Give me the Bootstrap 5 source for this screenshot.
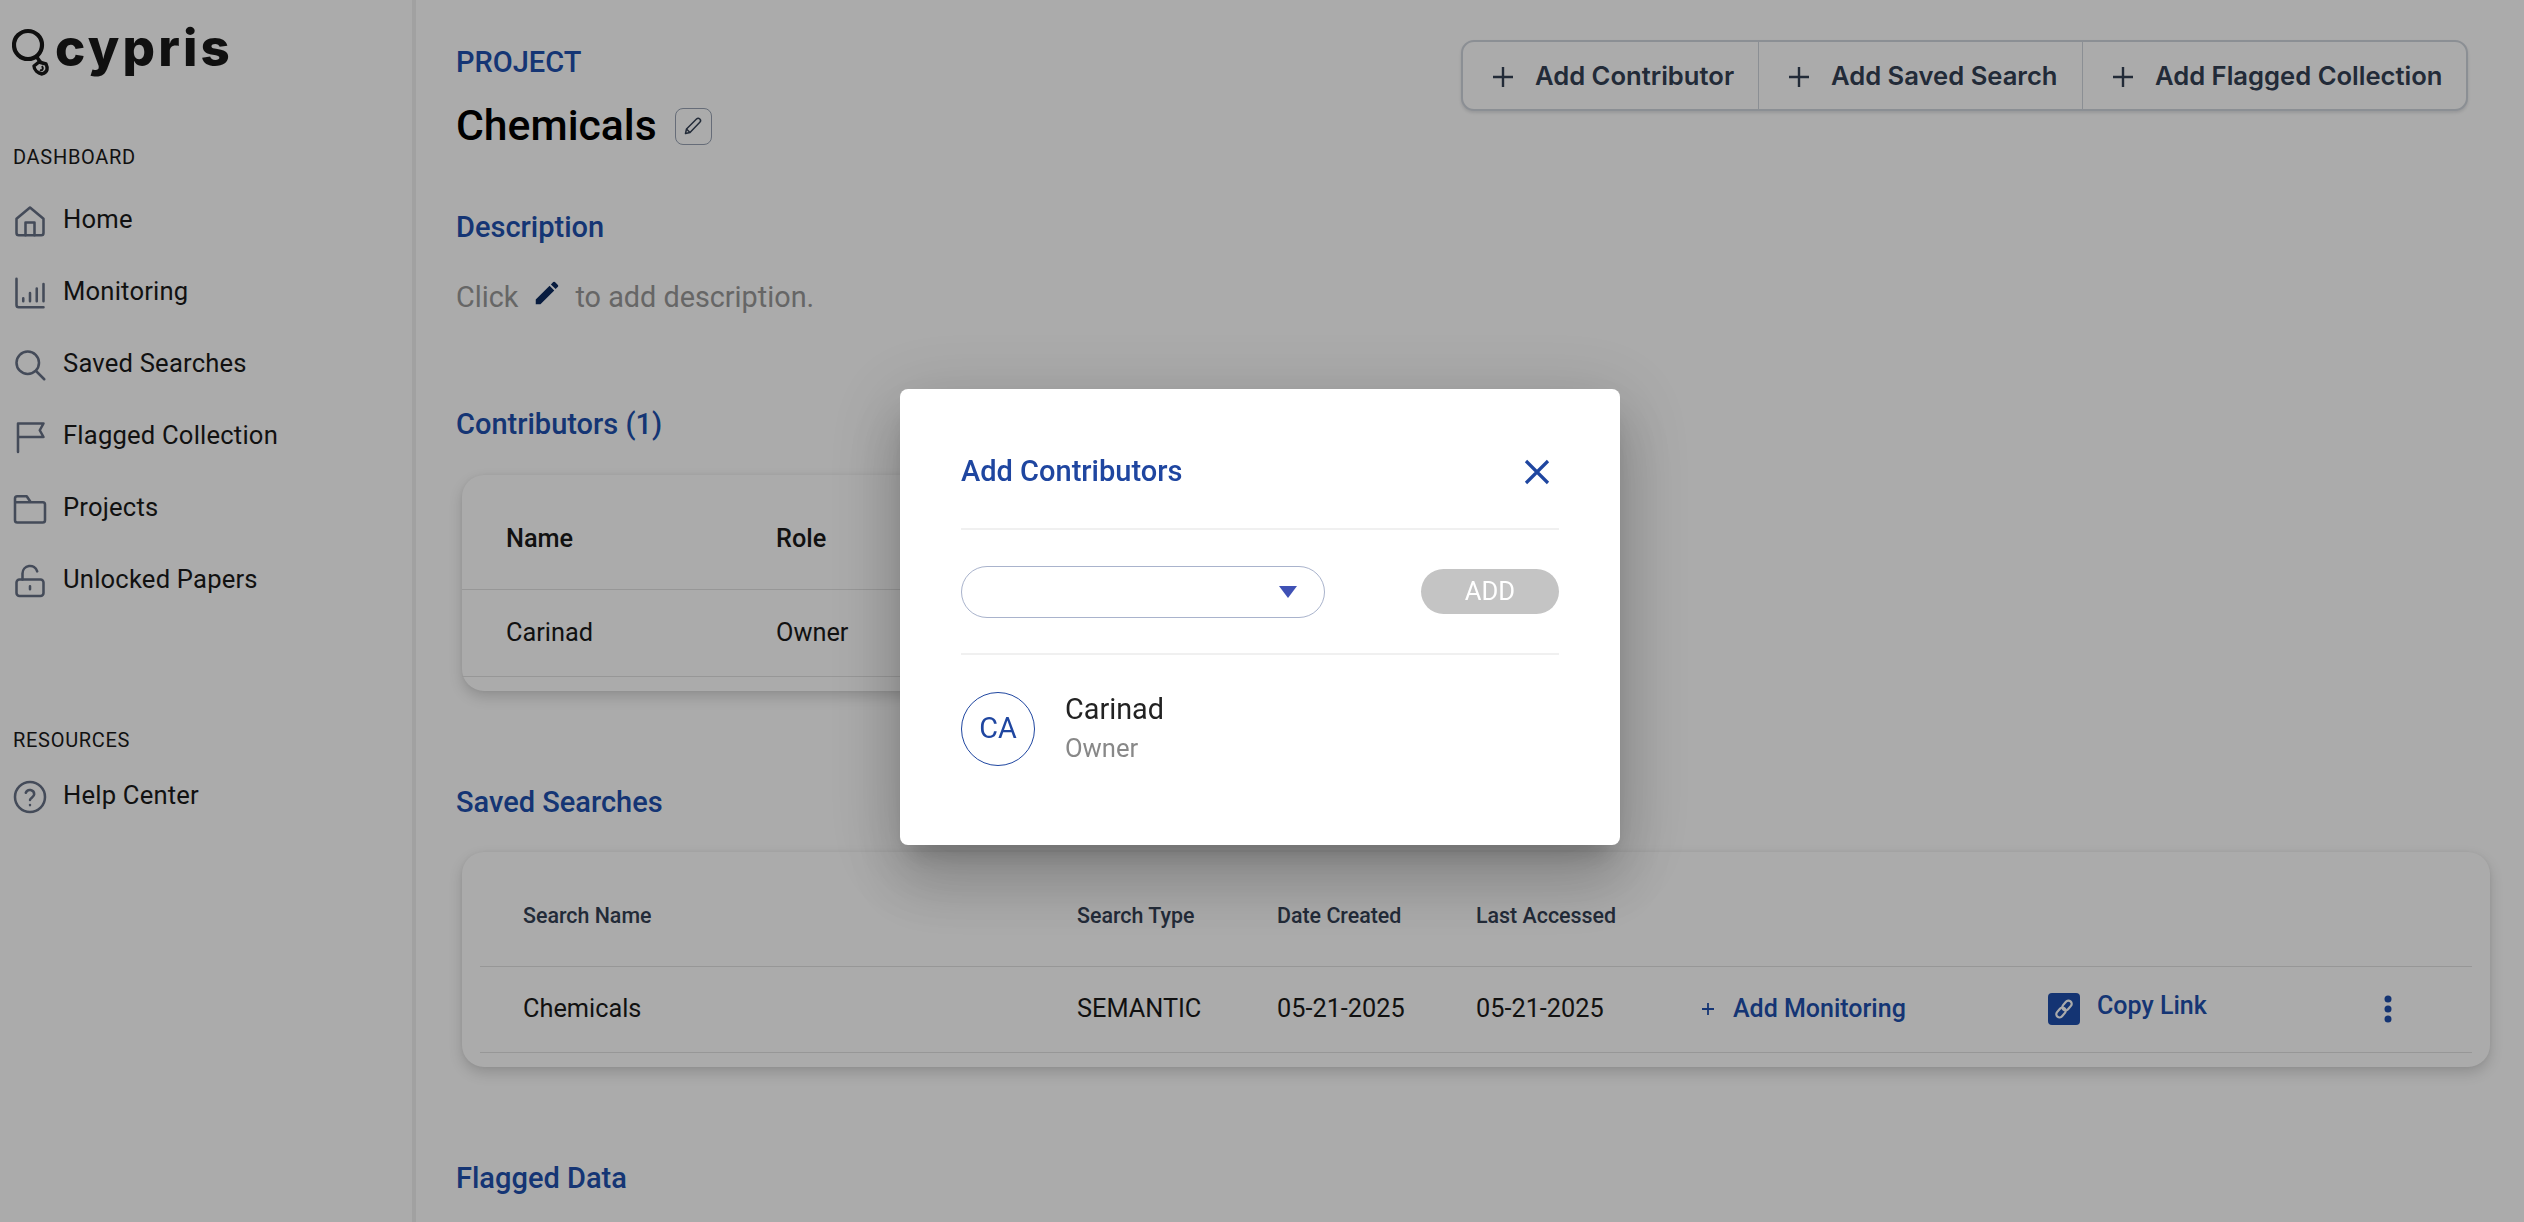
<!DOCTYPE html>
<html lang="en">
<head>
    <meta charset="UTF-8">
    <meta name="viewport" content="width=device-width, initial-scale=1.0">
    <title>Cypris - Project</title>
    <link href="https://cdn.jsdelivr.net/npm/bootstrap@5.3.3/dist/css/bootstrap.min.css" rel="stylesheet">
    <style>
        html, body {
            height: 100%;
            overflow: hidden;
            margin: 0;
            background: #fff;
            font-family: Roboto, "Liberation Sans", sans-serif;
            color: #1a1a1a;
        }
        /* sidebar */
        #side-bar {
            width: 416px;
            flex-shrink: 0;
            border-right: 4px solid #f0f0f0;
            height: 1222px;
        }
        .logo-row { padding: 27px 0 0 12px; height: 145px; }
        .logo-word {
            font-family: Inter, sans-serif;
            font-weight: 800;
            font-size: 51px;
            line-height: 50px;
            letter-spacing: 3.2px;
            color: #181818;
            margin-left: 5px;
            margin-top: -4px;
        }
        .side-title {
            font-size: 20px;
            line-height: 24px;
            letter-spacing: .7px;
            padding-left: 13px;
            margin-bottom: 15px;
        }
        .side-title-second { margin-bottom: 8px; }
        .side-link {
            height: 72px;
            padding-left: 12px;
            font-size: 25.6px;
            letter-spacing: .2px;
            color: #1a1a1a;
            text-decoration: none;
            gap: 15px;
        }
        .side-link svg { width: 36px; height: 36px; flex-shrink: 0; margin-top: 2px; }
        .side-link span { margin-top: -2px; }
        .side-gap { height: 112px; }
        .line-icon { fill: none; stroke: #667085; stroke-width: 1.7; stroke-linecap: round; stroke-linejoin: round; }

        /* main */
        #main-area { padding: 0 56px 0 40px; flex-grow: 1; min-width: 0; }
        .project-label { font-size: 29px; line-height: 36px; color: #2050ae; margin-top: 44px; font-weight: 500; }
        .project-title-row { margin-top: 17px; }
        .project-name { font-size: 42.7px; line-height: 56px; font-weight: 500; color: #000; margin: 0; }
        .edit-box {
            width: 37px; height: 37px;
            border: 1.5px solid #98a2b3;
            border-radius: 8px;
            margin-left: 18px;
            margin-top: 2px;
            background: #fff;
        }
        .add-group {
            margin-top: 40px;
            width: 1007px;
            height: 71px;
            border: 2px solid #d0d5dd;
            border-radius: 13px;
            box-shadow: 0 2px 3px rgba(16,24,40,.12);
            background: #fff;
        }
        .add-item {
            font-family: Inter, sans-serif;
            font-weight: 600;
            font-size: 25.6px;
            color: #344054;
            gap: 20px;
            padding-left: 28px;
            padding-top: 2px;
            border-right: 1px solid #d0d5dd;
            white-space: nowrap;
        }
        .add-item:last-child { border-right: 0; }
        .add-a { width: 296px; }
        .add-b { width: 324px; }
        .add-c { flex-grow: 1; }
        .sect-title { font-size: 29px; line-height: 38px; font-weight: 500; color: #2050ae; margin: 0; }
        .mt-desc { margin-top: 55px; }
        .mt-contrib { margin-top: 89px; }
        .mt-next { margin-top: 92px; }
        .desc-line { font-size: 28.8px; line-height: 38px; color: #999; margin-top: 32px; }
        .desc-line svg { width: 30px; height: 30px; margin: -8px 13px 0 14px; }

        .data-card {
            margin-left: 6px;
            border: 0;
            border-radius: 22px;
            box-shadow: 0 6px 14px rgba(0,0,0,.16), 0 0 4px rgba(0,0,0,.05);
        }
        .people-card { width: 640px; height: 216px; margin-top: 32px; }
        .people-table { margin: 0; }
        .people-table th, .people-table td { padding: 0 0 0 44px; vertical-align: middle; font-size: 25.3px; border-color: #e2e2e2; background: transparent; color: #1a1a1a; }
        .people-table th { height: 114px; font-weight: 500; padding-top: 14px; }
        .people-table td { height: 87px; font-weight: 400; }
        .people-first { width: 314px; }
        .search-card { width: 2028px; height: 215px; margin-top: 31px; padding: 0 18px; }
        .search-table { margin: 0; table-layout: fixed; width: 1992px; }
        .search-table th, .search-table td { padding: 0; vertical-align: middle; border-color: #e2e2e2; background: transparent; white-space: nowrap; }
        .search-table th { height: 114px; padding-top: 14px; font-weight: 500; font-size: 21.4px; color: #344054; }
        .search-table td { height: 86px; font-size: 25.3px; color: #1a1a1a; font-weight: 400; }
        .search-table .col-pad { padding-left: 43px; }
        .w-name { width: 597px; }
        .w-type { width: 200px; }
        .w-date { width: 199px; }
        .w-last { width: 224px; }
        .w-mon { width: 348px; }
        .act-link {
            font-weight: 500;
            font-size: 25px;
            color: #2050ae;
        }
        .act-plus { width: 20px; height: 20px; margin-right: 15px; margin-left: -2px; }
        .link-box { width: 32px; height: 32px; border-radius: 4px; background: #1f4eac; margin-right: 17px; flex-shrink: 0; }
        .copy-text { margin-top: -6px; }
        .dots-btn { width: 8px; height: 28px; margin-left: 177px; }

        /* dialog */
        .modal-backdrop.show { --bs-backdrop-opacity: .33; opacity: .33; background: #000; }
        .modal-dialog.contrib-dialog { margin: 389px 0 0 900px; width: 720px; max-width: none; }
        .contrib-box {
            height: 456px;
            border: 0;
            border-radius: 8px;
            padding: 0 61px;
            box-shadow: 0 18px 24px -11px rgba(0,0,0,.2), 0 38px 61px 5px rgba(0,0,0,.14), 0 14px 74px 13px rgba(0,0,0,.12);
        }
        .contrib-head { height: 141px; padding-top: 26px; border-bottom: 2px solid #f0f0f0; }
        .contrib-title { font-size: 29px; font-weight: 500; color: #1f46a0; margin: 0; }
        .contrib-close { margin-right: 8px; }
        .contrib-pick { height: 125px; border-bottom: 2px solid #f0f0f0; }
        .pick-field {
            width: 364px; height: 52px;
            border: 1px solid #a9b3cc;
            border-radius: 26px;
            padding-right: 27px;
        }
        .pick-add {
            width: 138px; height: 45px;
            border: 0;
            border-radius: 23px;
            background: #c4c4c4;
            color: #fff;
            font-size: 25.6px;
            padding: 0;
        }
        .contrib-person { padding-top: 37px; }
        .ca-circle {
            width: 74px; height: 74px;
            border: 1px solid #1f46a0;
            border-radius: 50%;
            font-size: 28.8px;
            color: #1f46a0;
            margin-right: 30px;
        }
        .person-name { font-size: 28.8px; line-height: 34px; color: #222; margin-top: 0; }
        .person-role { font-size: 25.6px; line-height: 30px; color: #888; margin-top: 7px; }
    </style>
</head>
<body>
    <div class="d-flex">
        <aside id="side-bar">
            <div class="logo-row d-flex">
                <svg width="38" height="52" viewBox="0 0 38 52" fill="none" stroke="#181818">
                    <circle cx="16" cy="18" r="14" stroke-width="4.2"/>
                    <path d="M24 29 L29 36" stroke-width="3.6"/>
                    <path d="M27 35 L34 37 C36 41 36 45 30 47 C26 46 22 43 22 39 Z" stroke-width="3.4" stroke-linejoin="round"/>
                    <path d="M30 39 C32 42 30 44 28 43" stroke-width="2"/>
                </svg>
                <div class="logo-word">cypris</div>
            </div>
            <div class="side-title">DASHBOARD</div>
            <a class="side-link d-flex align-items-center" href="#">
                <svg viewBox="0 0 24 24" class="line-icon"><path d="M3 10.500 12 3l9 7.500V20a1.500 1.500 0 0 1-1.500 1.500h-15A1.500 1.500 0 0 1 3 20Z"/><path d="M9 21.500V13h6v8.500"/></svg>
                <span>Home</span>
            </a>
            <a class="side-link d-flex align-items-center" href="#">
                <svg viewBox="0 0 24 24" class="line-icon"><path d="M3 2.500V20a1.500 1.500 0 0 0 1.500 1.500H21"/><path d="M7.500 15.500v2M12 12v5.500M16.500 9v8.500M21 6v11.500"/></svg>
                <span>Monitoring</span>
            </a>
            <a class="side-link d-flex align-items-center" href="#">
                <svg viewBox="0 0 24 24" class="line-icon"><circle cx="10.500" cy="10.500" r="7.500"/><path d="m16 16 5.500 5.500"/></svg>
                <span>Saved Searches</span>
            </a>
            <a class="side-link d-flex align-items-center" href="#">
                <svg viewBox="0 0 24 24" class="line-icon"><path d="M4 22V3h17l-2.500 4.500L21 12H4"/></svg>
                <span>Flagged Collection</span>
            </a>
            <a class="side-link d-flex align-items-center" href="#">
                <svg viewBox="0 0 24 24" class="line-icon"><path d="M2 8V19.500A1.500 1.500 0 0 0 3.500 21h17a1.500 1.500 0 0 0 1.500-1.500V9a1.500 1.500 0 0 0-1.500-1.500H2Zm0 0V5a1.500 1.500 0 0 1 1.500-1.500h6.300L12.500 7.500"/></svg>
                <span>Projects</span>
            </a>
            <a class="side-link d-flex align-items-center" href="#">
                <svg viewBox="0 0 24 24" class="line-icon"><rect x="3" y="11" width="18" height="11" rx="2"/><path d="M7 11V7a5 5 0 0 1 9.800-1.400M12 15.500v2"/></svg>
                <span>Unlocked Papers</span>
            </a>
            <div class="side-gap"></div>
            <div class="side-title side-title-second">RESOURCES</div>
            <a class="side-link d-flex align-items-center" href="#">
                <svg viewBox="0 0 24 24" class="line-icon"><circle cx="12" cy="12" r="10"/><path d="M9.200 9.200a2.900 2.900 0 0 1 5.600 1c0 1.900-2.800 2.500-2.800 3.800M12 17.300v.1"/></svg>
                <span>Help Center</span>
            </a>
        </aside>

        <main id="main-area">
            <div class="d-flex justify-content-between align-items-start">
                <div>
                    <div class="project-label">PROJECT</div>
                    <div class="project-title-row d-flex align-items-center">
                        <h1 class="project-name">Chemicals</h1>
                        <div class="edit-box d-flex align-items-center justify-content-center">
                            <svg width="20" height="20" viewBox="0 0 20 20" fill="none" stroke="#344054" stroke-width="1.500" stroke-linejoin="round"><path d="M2.500 17.500 3.500 13 13.500 3a2.200 2.200 0 0 1 3.300 3.300L7 16.500Z"/><path d="M3.500 13 7 16.500"/></svg>
                        </div>
                    </div>
                </div>
                <div class="add-group d-flex">
                    <div class="add-item add-a d-flex align-items-center">
                        <svg width="24" height="24" viewBox="0 0 24 24" fill="none" stroke="#344054" stroke-width="2.400"><path d="M12 2v20M2 12h20"/></svg>Add Contributor
                    </div>
                    <div class="add-item add-b d-flex align-items-center">
                        <svg width="24" height="24" viewBox="0 0 24 24" fill="none" stroke="#344054" stroke-width="2.400"><path d="M12 2v20M2 12h20"/></svg>Add Saved Search
                    </div>
                    <div class="add-item add-c d-flex align-items-center">
                        <svg width="24" height="24" viewBox="0 0 24 24" fill="none" stroke="#344054" stroke-width="2.400"><path d="M12 2v20M2 12h20"/></svg>Add Flagged Collection
                    </div>
                </div>
            </div>

            <h2 class="sect-title mt-desc">Description</h2>
            <div class="desc-line d-flex align-items-center">Click
                <svg viewBox="0 0 24 24" fill="#0d2a5e"><path d="M3 17.250V21h3.750L17.810 9.940l-3.750-3.750L3 17.250zM20.710 7.040a1 1 0 0 0 0-1.410l-2.340-2.340a1 1 0 0 0-1.410 0l-1.830 1.830 3.750 3.750 1.830-1.830z"/></svg>
                to add description.</div>

            <h2 class="sect-title mt-contrib">Contributors (1)</h2>
            <div class="card data-card people-card">
                <table class="table people-table">
                    <thead><tr><th class="people-first">Name</th><th class="ps-0">Role</th></tr></thead>
                    <tbody><tr><td>Carinad</td><td class="ps-0">Owner</td></tr></tbody>
                </table>
            </div>

            <h2 class="sect-title mt-next">Saved Searches</h2>
            <div class="card data-card search-card">
                <table class="table search-table">
                    <thead>
                        <tr>
                            <th class="col-pad w-name">Search Name</th>
                            <th class="w-type">Search Type</th>
                            <th class="w-date">Date Created</th>
                            <th class="w-last">Last Accessed</th>
                            <th class="w-mon"></th>
                            <th></th>
                        </tr>
                    </thead>
                    <tbody>
                        <tr>
                            <td class="col-pad">Chemicals</td>
                            <td>SEMANTIC</td>
                            <td>05-21-2025</td>
                            <td>05-21-2025</td>
                            <td>
                                <div class="act-link d-flex align-items-center">
                                    <svg class="act-plus" viewBox="0 0 20 20" fill="none" stroke="#2050ae" stroke-width="1.800"><path d="M10 4v12M4 10h12"/></svg>Add Monitoring
                                </div>
                            </td>
                            <td>
                                <div class="d-flex align-items-center">
                                    <div class="link-box d-flex align-items-center justify-content-center">
                                        <svg width="24" height="24" viewBox="0 0 24 24" fill="none" stroke="#fff" stroke-width="2.200">
                                            <rect x="11.750" y="3" width="6.500" height="11" rx="3.250" transform="rotate(40 15 8.500)"/>
                                            <rect x="5.750" y="10" width="6.500" height="11" rx="3.250" transform="rotate(40 9 15.500)"/>
                                        </svg>
                                    </div>
                                    <span class="act-link copy-text">Copy Link</span>
                                    <svg class="dots-btn" viewBox="0 0 8 28" fill="#1f4eac"><circle cx="4" cy="4" r="3.500"/><circle cx="4" cy="14" r="3.500"/><circle cx="4" cy="24" r="3.500"/></svg>
                                </div>
                            </td>
                        </tr>
                    </tbody>
                </table>
            </div>

            <h2 class="sect-title mt-next">Flagged Data</h2>
        </main>
    </div>

    <div class="modal-backdrop show"></div>
    <div class="modal d-block" tabindex="-1">
        <div class="modal-dialog contrib-dialog">
            <div class="modal-content contrib-box">
                <div class="contrib-head d-flex align-items-center justify-content-between">
                    <h5 class="contrib-title">Add Contributors</h5>
                    <svg class="contrib-close" width="28" height="28" viewBox="0 0 28 28" fill="none" stroke="#1f46a0" stroke-width="3.200"><path d="M3 3l22 22M25 3 3 25"/></svg>
                </div>
                <div class="contrib-pick d-flex align-items-center justify-content-between">
                    <div class="pick-field d-flex align-items-center justify-content-end">
                        <svg width="18" height="12" viewBox="0 0 18 12" fill="#3f51b5"><path d="M0 0h18L9 12Z"/></svg>
                    </div>
                    <button type="button" class="btn pick-add">ADD</button>
                </div>
                <div class="contrib-person d-flex align-items-start">
                    <div class="ca-circle d-flex align-items-center justify-content-center">CA</div>
                    <div>
                        <div class="person-name">Carinad</div>
                        <div class="person-role">Owner</div>
                    </div>
                </div>
            </div>
        </div>
    </div>
    <script src="https://cdn.jsdelivr.net/npm/bootstrap@5.3.3/dist/js/bootstrap.bundle.min.js"></script>
</body>
</html>
